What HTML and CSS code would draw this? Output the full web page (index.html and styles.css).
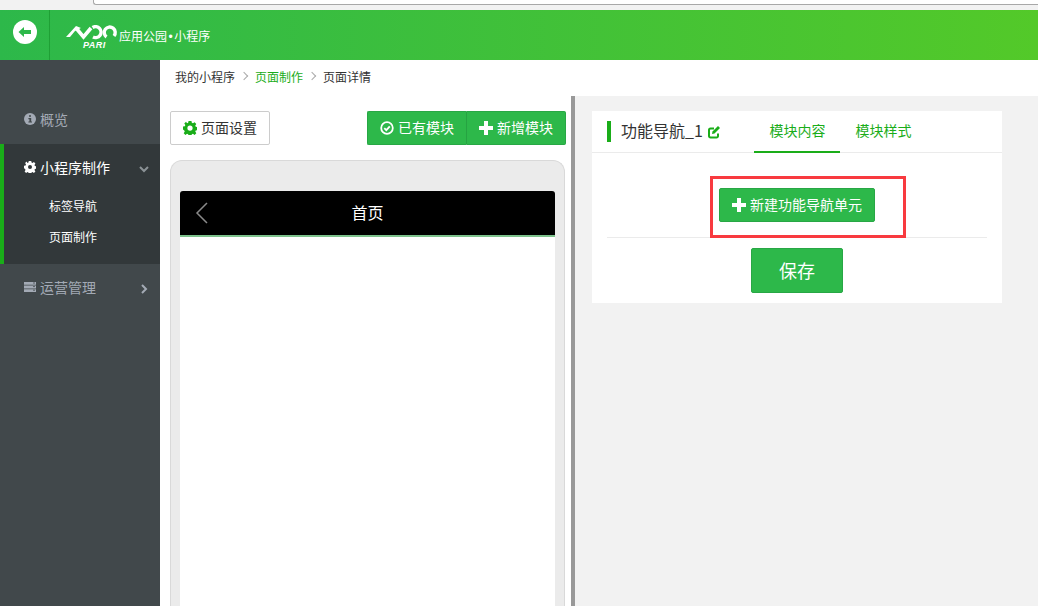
FILE: index.html
```html
<!DOCTYPE html>
<html lang="zh-CN">
<head>
    <meta charset="UTF-8">
    <title>页面详情</title>
    <link rel="stylesheet" href="styles.css">
</head>
<body>
    <div class="chrome"><div class="address"></div></div>

    <header class="topbar">
        <div class="back">
            <svg width="26" height="26" viewBox="0 0 26 26"><circle cx="13" cy="13" r="12" fill="#fff"/><path d="M6.500 13L12 8v3h7v4h-7v3z" fill="#2db84a"/></svg>
        </div>
        <div class="brand">
            <div class="logo">
                <svg width="52" height="17" viewBox="0 0 52 17"><path d="M0 12L10 1l5 2-6 3-5 6z" fill="#fff"/><path d="M10 3l7.500 9L25 3" fill="none" stroke="#fff" stroke-width="3.600"/><path d="M26.500 2.500A5.500 5.500 0 1 1 27 12" fill="none" stroke="#fff" stroke-width="3.400"/><path d="M48 11A5.500 5.500 0 1 0 40.500 12" fill="none" stroke="#fff" stroke-width="3.400"/></svg>
                <span class="logo-text">PARI</span>
            </div>
            <span class="brand-name">应用公园<span class="dot">•</span>小程序</span>
        </div>
    </header>

    <div class="main">
        <nav class="sidebar">
            <a class="nav-item first">
                <svg class="nav-icon" viewBox="0 0 12 12"><circle cx="6" cy="6" r="6" fill="currentColor"/><path d="M5 2.200h2v1.600H5zM4.400 5h2.800v3.400H8v1.200H4.400V8.400h1V6.200h-1z" fill="#41484b"/></svg>
                <span>概览</span>
            </a>
            <div class="nav-group">
                <a class="nav-item active">
                    <svg class="nav-icon" viewBox="0 0 24 24"><path d="M9.500 0h5l.6 3.200 2 .8 2.700-1.800 3 3-1.800 2.700.8 2 3.200.6v5l-3.200.6-.8 2 1.800 2.700-3 3-2.700-1.800-2 .8-.6 3.200h-5l-.6-3.200-2-.8-2.700 1.800-3-3 1.800-2.700-.8-2L0 14.500v-5l3.200-.6.8-2-1.800-2.700 3-3L6.900 4l2-.8z" fill="currentColor"/><circle cx="12" cy="12" r="4" fill="#32383a"/></svg>
                    <span>小程序制作</span>
                    <svg class="nav-arrow" viewBox="0 0 10 10"><path d="M1 3l4 4 4-4" fill="none" stroke="currentColor" stroke-width="2"/></svg>
                </a>
                <a class="nav-sub">标签导航</a>
                <a class="nav-sub">页面制作</a>
            </div>
            <a class="nav-item">
                <svg class="nav-icon" viewBox="0 0 12 12"><path d="M0 1h12v2.800H0zM0 4.600h12v2.800H0zM0 8.200h12V11H0z" fill="currentColor"/><path d="M9 2h2M9 5.600h2M9 9.200h2" stroke="#41484b" stroke-width=".8"/></svg>
                <span>运营管理</span>
                <svg class="nav-arrow" viewBox="0 0 10 10"><path d="M3 1l4 4-4 4" fill="none" stroke="currentColor" stroke-width="2"/></svg>
            </a>
        </nav>

        <div class="content">
            <div class="breadcrumb">
                <span>我的小程序</span>
                <i class="crumb-sep"></i>
                <span class="crumb-on">页面制作</span>
                <i class="crumb-sep"></i>
                <span>页面详情</span>
            </div>

            <div class="workspace">
                <section class="left">
                    <div class="toolbar">
                        <button class="btn-plain">
                            <svg class="icon" viewBox="0 0 24 24"><path d="M9.500 0h5l.6 3.200 2 .8 2.700-1.800 3 3-1.800 2.700.8 2 3.200.6v5l-3.200.6-.8 2 1.800 2.700-3 3-2.700-1.800-2 .8-.6 3.200h-5l-.6-3.200-2-.8-2.700 1.800-3-3 1.800-2.700-.8-2L0 14.500v-5l3.200-.6.8-2-1.800-2.700 3-3L6.900 4l2-.8z" fill="#1aad19"/><circle cx="12" cy="12" r="4.500" fill="#fff"/></svg>
                            页面设置
                        </button>
                        <div class="btn-group">
                            <button class="btn-green">
                                <svg class="icon" viewBox="0 0 14 14"><circle cx="7" cy="7" r="5.800" fill="none" stroke="#fff" stroke-width="1.800"/><path d="M4.300 7.200l2 2 3.500-3.800" fill="none" stroke="#fff" stroke-width="1.800"/></svg>
                                已有模块
                            </button>
                            <button class="btn-green">
                                <svg class="icon" viewBox="0 0 14 14"><path d="M5 0h4v5h5v4H9v5H5V9H0V5h5z" fill="#fff"/></svg>
                                新增模块
                            </button>
                        </div>
                    </div>

                    <div class="phone">
                        <div class="phone-head">
                            <svg class="phone-back" width="14" height="22" viewBox="0 0 14 22"><path d="M12 1L2 11l10 10" fill="none" stroke="#8a8a8a" stroke-width="1.500"/></svg>
                            <span>首页</span>
                        </div>
                        <div class="phone-body"></div>
                    </div>
                </section>

                <div class="splitter"></div>

                <section class="right">
                    <div class="card">
                        <div class="card-head">
                            <div class="card-title">
                                功能导航_1
                                <svg class="edit" viewBox="0 0 14 14"><path d="M11 8.500V11a1.500 1.500 0 0 1-1.500 1.500h-6A1.500 1.500 0 0 1 2 11V5a1.500 1.500 0 0 1 1.500-1.500H7" fill="none" stroke="#1aad19" stroke-width="2"/><path d="M5.500 6.500L11 1l2 2-5.500 5.500-2.500.5z" fill="#1aad19"/></svg>
                            </div>
                            <div class="tabs">
                                <a class="tab on">模块内容</a>
                                <a class="tab">模块样式</a>
                            </div>
                        </div>
                        <div class="card-body">
                            <div class="add-row">
                                <button class="btn-add">
                                    <svg class="icon" viewBox="0 0 14 14"><path d="M5 0h4v5h5v4H9v5H5V9H0V5h5z" fill="#fff"/></svg>
                                    新建功能导航单元
                                </button>
                                <div class="mark"></div>
                            </div>
                            <div class="save-row">
                                <button class="btn-save">保存</button>
                            </div>
                        </div>
                    </div>
                </section>
            </div>
        </div>
    </div>
</body>
</html>
```

FILE: styles.css
```css
*{
    margin: 0;
    padding: 0;
    box-sizing: border-box;
}

html, body{
    height: 606px;
    overflow: hidden;
}

body{
    background-color: #fff;
    font-family: "Noto Sans CJK SC", "Liberation Sans", sans-serif;
    font-size: 12px;
    color: #333;
}

button{
    font-family: inherit;
    border: none;
}

/* browser strip */
.chrome{
    height: 10px;
    padding-left: 93px;
    background-color: #f2f2f2;
}

.address{
    height: 5px;
    background-color: #fff;
    border: 1px solid #a8a8a8;
    border-top: none;
    border-right: none;
    border-bottom-left-radius: 3px;
}

/* top green bar */
.topbar{
    display: flex;
    height: 50px;
    background: linear-gradient(to right, #2db84a, #53c929);
    color: #fff;
}

.back{
    width: 50px;
    display: flex;
    justify-content: center;
    padding-top: 9px;
    border-right: 1px solid #1fa035;
}

.brand{
    display: flex;
    align-items: center;
    padding-left: 16px;
    gap: 3px;
}

.logo{
    width: 50px;
    height: 34px;
    position: relative;
    padding-top: 7px;
}

.logo-text{
    position: absolute;
    left: 17px;
    top: 22px;
    font: italic bold 9px "Liberation Sans", sans-serif;
    letter-spacing: 0.5px;
}

.brand-name{
    font-size: 12px;
}

.dot{
    margin: 0 1.500px;
    font-family: "Liberation Sans", sans-serif;
}

.main{
    display: flex;
    height: 546px;
}

/* sidebar */
.sidebar{
    width: 160px;
    flex-shrink: 0;
    background-color: #41484b;
    color: #a3aab5;
    font-size: 14px;
}

.nav-item{
    display: flex;
    align-items: center;
    height: 48px;
    padding-left: 24px;
    padding-bottom: 2px;
    position: relative;
}

.nav-item.first{
    height: 84px;
    padding-top: 36px;
}

.nav-icon{
    width: 12px;
    height: 12px;
    margin-right: 4px;
}

.nav-arrow{
    width: 10px;
    height: 10px;
    position: absolute;
    right: 11px;
    top: 20px;
}

.nav-group{
    height: 120px;
    background-color: #32383a;
    border-left: 4px solid #1aad19;
}

.nav-item.active{
    padding-left: 20px;
    color: #fff;
}

.nav-item.active .nav-arrow{
    color: #8b9296;
}

.nav-sub{
    display: block;
    height: 31px;
    line-height: 27px;
    padding-left: 45px;
    font-size: 12px;
    color: #fff;
}

/* content */
.content{
    flex: 1;
    display: flex;
    flex-direction: column;
    min-width: 0;
}

.breadcrumb{
    display: flex;
    align-items: center;
    height: 36px;
    padding-left: 15px;
    padding-bottom: 4px;
    font-size: 12px;
    color: #333;
}

.crumb-on{
    color: #1aad19;
}

.crumb-sep{
    width: 6px;
    height: 6px;
    margin: 0 8px 0 6px;
    border-top: 1px solid #aaa;
    border-right: 1px solid #aaa;
    transform: rotate(45deg);
}

.workspace{
    flex: 1;
    display: flex;
    min-height: 0;
}

.left{
    width: 411px;
    padding: 15px 5px 0 10px;
    overflow: hidden;
}

.toolbar{
    display: flex;
    justify-content: space-between;
    align-items: center;
}

.icon{
    width: 14px;
    height: 14px;
    margin-right: 1px;
    vertical-align: -2px;
}

.btn-plain{
    width: 100px;
    height: 34px;
    padding-bottom: 2px;
    background-color: #fff;
    border: 1px solid #ccc;
    border-radius: 2px;
    font-size: 14px;
    color: #333;
}

.btn-group{
    display: flex;
}

.btn-green{
    height: 34px;
    width: 100px;
    padding-bottom: 2px;
    background-color: #2db84a;
    border: 1px solid #28a745;
    color: #fff;
    font-size: 14px;
}

.btn-green:first-child{
    border-radius: 2px 0 0 2px;
    border-right-color: #26a342;
}

.btn-green:last-child{
    width: 99px;
    border-left: none;
    border-radius: 0 2px 2px 0;
}

.phone{
    width: 395px;
    height: 500px;
    margin-top: 15px;
    padding: 30px 9px 0;
    background-color: #ebebeb;
    border: 1px solid #d9d9d9;
    border-bottom: none;
    border-radius: 12px 12px 0 0;
}

.phone-head{
    height: 46px;
    padding-bottom: 2px;
    position: relative;
    display: flex;
    align-items: center;
    justify-content: center;
    background-color: #000;
    border-bottom: 2px solid #7dc28c;
    border-radius: 3px 3px 0 0;
    color: #fff;
    font-size: 16px;
}

.phone-back{
    position: absolute;
    left: 15px;
    top: 11px;
}

.phone-body{
    height: 400px;
    background-color: #fff;
}

.splitter{
    width: 4px;
    background-color: #999;
}

.right{
    flex: 1;
    padding: 15px 36px 0 17px;
    background-color: #f2f2f2;
}

.card{
    background-color: #fff;
}

.card-head{
    display: flex;
    height: 42px;
    padding-left: 15px;
    border-bottom: 1px solid #ebebeb;
}

.card-title{
    width: 147px;
    height: 21px;
    margin-top: 10px;
    padding-left: 10px;
    border-left: 4px solid #1aad19;
    font-size: 16px;
    line-height: 19px;
    color: #333;
    white-space: nowrap;
}

.edit{
    width: 14px;
    height: 14px;
    margin-left: 1px;
    vertical-align: -2px;
}

.tabs{
    display: flex;
}

.tab{
    width: 86px;
    height: 42px;
    padding-left: 1px;
    line-height: 38px;
    text-align: center;
    font-size: 14px;
    color: #1aad19;
}

.tab.on{
    border-bottom: 2px solid #1aad19;
}

.card-body{
    padding: 0 15px;
}

.add-row{
    position: relative;
    display: flex;
    justify-content: center;
    align-items: flex-start;
    height: 85px;
    padding-top: 35px;
    border-bottom: 1px solid #ebebeb;
}

/* red annotation drawn over the screenshot */
.mark{
    position: absolute;
    left: 103px;
    top: 23px;
    width: 196px;
    height: 62px;
    border: 3px solid #f83a3f;
}

.btn-add{
    width: 156px;
    height: 34px;
    padding-bottom: 2px;
    background-color: #2db84a;
    border: 1px solid #28a745;
    border-radius: 2px;
    color: #fff;
    font-size: 14px;
}

.save-row{
    display: flex;
    justify-content: center;
    padding: 10px 0;
}

.btn-save{
    width: 92px;
    height: 45px;
    padding-bottom: 2px;
    background-color: #2db84a;
    border: 1px solid #28a745;
    border-radius: 2px;
    color: #fff;
    font-size: 18px;
}
```
